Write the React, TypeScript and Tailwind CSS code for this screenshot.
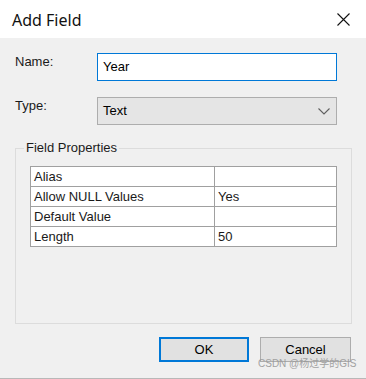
import React from "react";

const rows: [string, string][] = [
  ["Alias", ""],
  ["Allow NULL Values", "Yes"],
  ["Default Value", ""],
  ["Length", "50"],
];

export default function App() {
  return (
    <div className="w-[366px] h-[379px] bg-white flex flex-col overflow-hidden text-[13px] text-[#1a1a1a] [font-family:'Liberation_Sans',Arial,sans-serif]">
      <div className="h-[38px] shrink-0 bg-white flex items-center justify-between pl-[12px] pr-[16px]">
        <span className="text-[16px] text-[#111] [font-family:'Noto_Sans',sans-serif] leading-none mt-[1px]">Add Field</span>
        <svg width="13" height="13" viewBox="0 0 13 13" className="mt-[1px]">
          <path d="M0.5 0.5 L12.5 12.5 M12.5 0.5 L0.5 12.5" stroke="#111" strokeWidth="1.1" fill="none" />
        </svg>
      </div>
      <div className="relative flex-1 bg-[#f0f0f0] border-b border-[#b8b8b8] flex flex-col pt-[15px]">
        <div className="flex items-start pl-[15px]">
          <div className="w-[82px] leading-4 mt-[1px]">Name:</div>
          <div className="w-[240px] h-[28px] bg-white border border-[#0078d7] flex items-center px-[5px] text-[13px] text-[#000]">
            Year
          </div>
        </div>
        <div className="flex items-start pl-[15px] mt-[16px]">
          <div className="w-[82px] leading-4 mt-[1px]">Type:</div>
          <div className="w-[240px] h-[28px] bg-[#e5e5e5] border border-[#adadad] flex items-center justify-between pl-[5px] pr-[6px] text-[#000]">
            <span>Text</span>
            <svg width="12" height="7" viewBox="0 0 12 7">
              <path d="M0.5 0.5 L6 6 L11.5 0.5" stroke="#5f5f5f" strokeWidth="1.1" fill="none" />
            </svg>
          </div>
        </div>
        <fieldset className="ml-[15px] mt-[15px] w-[337px] h-[184px] border border-[#dcdcdc] px-[14px]">
          <legend className="ml-[-6px] px-[2px] leading-4">Field Properties</legend>
          <div className="mt-[10px] w-[307px] border border-[#a0a0a0] bg-white">
            {rows.map(([k, v], i) => (
              <div key={k} className={`flex h-[19px] leading-[19px] ${i > 0 ? "border-t border-[#a0a0a0] h-[20px]" : ""}`}>
                <div className="w-[183px] pl-[3px]">{k}</div>
                <div className="flex-1 border-l border-[#a0a0a0] pl-[3px]">{v}</div>
              </div>
            ))}
          </div>
        </fieldset>
        <div className="flex justify-end gap-[11px] pr-[15px] mt-[13px]">
          <button className="w-[90px] h-[25px] bg-[#e1e1e1] border-2 border-[#0078d7] text-[13px] text-[#000] flex items-center justify-center">
            OK
          </button>
          <button className="w-[91px] h-[25px] bg-[#e1e1e1] border border-[#adadad] text-[13px] text-[#000] flex items-center justify-center">
            Cancel
          </button>
        </div>
        <div className="absolute left-[258px] top-[321px] text-[10px] leading-none text-[#9a9a9a] opacity-90 [font-family:'Liberation_Sans','Noto_Sans_CJK_SC',sans-serif] whitespace-nowrap">
          CSDN @杨过学的GIS
        </div>
      </div>
    </div>
  );
}
